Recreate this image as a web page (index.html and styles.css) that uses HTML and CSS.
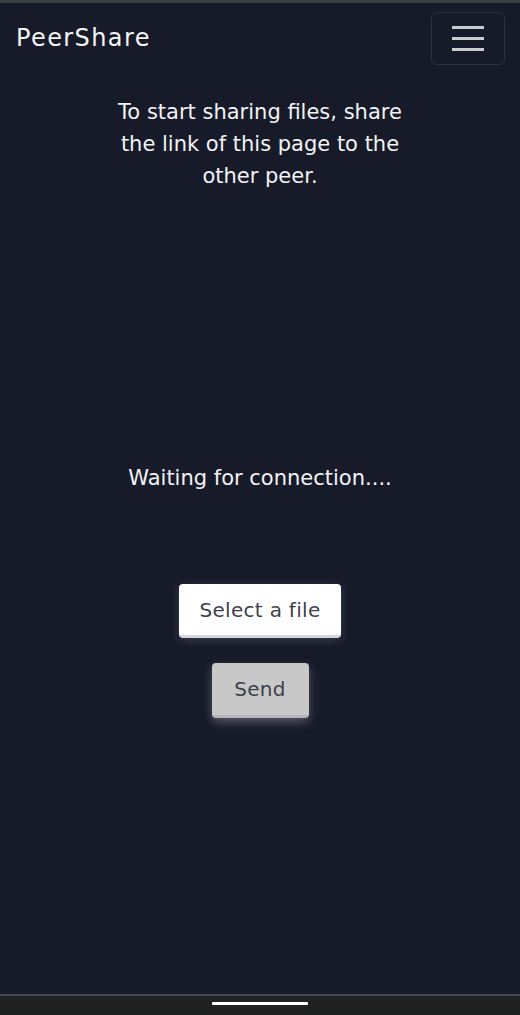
FILE: index.html
```html
<!DOCTYPE html>
<html lang="en">
<head>
<meta charset="utf-8">
<title>PeerShare</title>
<link rel="stylesheet" href="styles.css">
</head>
<body>
<div class="screen">
  <div class="status-edge"></div>
  <header class="navbar">
    <span class="brand">PeerShare</span>
    <button class="toggler" aria-label="Menu">
      <svg width="34" height="26" viewBox="0 0 34 26">
        <path d="M1 2.5H33M1 13.5H33M1 24.5H33" stroke="#c9cbd1" stroke-width="3" fill="none"/>
      </svg>
    </button>
  </header>
  <main class="content">
    <p class="intro">To start sharing files, share the link of this page to the other peer.</p>
    <p class="status">Waiting for connection....</p>
    <div class="actions">
      <button class="btn btn-select">Select a file</button>
      <button class="btn btn-send">Send</button>
    </div>
  </main>
  <div class="gesture-bar"><span class="handle"></span></div>
</div>
</body>
</html>
```
FILE: styles.css
```css
* { box-sizing: border-box; }
html, body { margin: 0; padding: 0; }
body {
  background: #171b29;
  font-family: "DejaVu Sans", "Open Sans", sans-serif;
  color: #f2f3f5;
}
.screen {
  width: 520px;
  height: 1015px;
  display: flex;
  flex-direction: column;
  background: #171b29;
}
.status-edge {
  height: 3px;
  background: #3d4046;
  flex: none;
}
.navbar {
  flex: none;
  display: flex;
  align-items: center;
  justify-content: space-between;
  padding: 4px 16px 0 16px;
  height: 66px;
}
.brand {
  font-size: 24px;
  letter-spacing: 1.4px;
  color: #f4f5f7;
}
.toggler {
  width: 74px;
  height: 53px;
  background: transparent;
  border: 1px solid #2b303d;
  border-radius: 6px;
  display: flex;
  align-items: center;
  justify-content: center;
  padding: 0;
  margin-right: -1px;
}
.content {
  flex: 1;
  display: flex;
  flex-direction: column;
  align-items: center;
}
.intro {
  width: 292px;
  margin: 27px 0 0 0;
  text-align: center;
  font-size: 21px;
  line-height: 32px;
}
.status {
  margin: 273px 0 0 0;
  font-size: 21px;
  line-height: 26px;
}
.actions {
  margin-top: 93px;
  display: flex;
  flex-direction: column;
  align-items: center;
  gap: 25px;
}
.btn {
  font-family: inherit;
  font-size: 20px;
  letter-spacing: 0.3px;
  color: #3d3f4c;
  border: none;
  border-radius: 4px;
  cursor: pointer;
}
.btn-select {
  width: 162px;
  height: 54px;
  background: #ffffff;
  border-bottom: 3px solid #d4d5e3;
  box-shadow: 0 2px 8px rgba(160, 165, 200, 0.25);
}
.btn-send {
  width: 97px;
  height: 55px;
  background: #c8c8c9;
  border-bottom: 3px solid #b5b5b8;
  box-shadow: 0 4px 10px rgba(200, 200, 215, 0.35);
}
.gesture-bar {
  flex: none;
  height: 21px;
  background: #202121;
  border-top: 2px solid #44474c;
  display: flex;
  justify-content: center;
  padding-top: 6px;
}
.handle {
  width: 96px;
  height: 3px;
  background: #ffffff;
  border-radius: 1px;
}
```
